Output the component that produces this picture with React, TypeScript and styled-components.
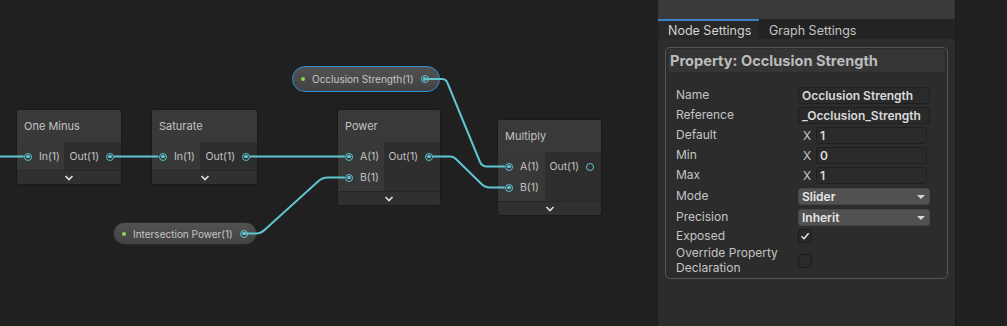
import React from 'react';
import styled, { createGlobalStyle } from 'styled-components';

const GlobalStyle = createGlobalStyle`
  html, body {
    margin: 0;
    padding: 0;
    background: #202020;
    font-family: Inter, "Noto Sans", "Liberation Sans", sans-serif;
    overflow: hidden;
  }
`;

const WIRE = '#5ec5d1';

const Screen = styled.div`
  display: flex;
  width: 1007px;
  height: 326px;
  overflow: hidden;
`;

// ---------- graph canvas ----------

const Canvas = styled.div`
  position: relative;
  width: 658px;
  height: 100%;
  background: #202020;
  overflow: hidden;
`;

const NodeBox = styled.div<{ $x: number; $y: number; $w: number }>`
  position: absolute;
  left: ${(p) => p.$x}px;
  top: ${(p) => p.$y}px;
  width: ${(p) => p.$w}px;
  display: flex;
  flex-direction: column;
  box-shadow: 0 0 0 1px #1a1a1a;
  border-radius: 2px;
  overflow: hidden;
`;

const NodeTitle = styled.div`
  height: 32px;
  display: flex;
  align-items: center;
  padding-left: 7px;
  background: #393939;
  color: #c2c2c2;
  font-size: 11px;
  white-space: nowrap;
`;

const PortsArea = styled.div`
  display: flex;
`;

const Inputs = styled.div<{ $w: number }>`
  width: ${(p) => p.$w}px;
  background: #383838;
  padding: 4px 0 3px;
`;

const Outputs = styled.div`
  flex: 1;
  background: #2e2e2e;
  padding: 4px 0 3px;
`;

const PortRow = styled.div<{ $out?: boolean }>`
  height: 21px;
  display: flex;
  align-items: center;
  justify-content: ${(p) => (p.$out ? 'flex-end' : 'flex-start')};
  gap: 7px;
  padding: ${(p) => (p.$out ? '0 7px 0 0' : '0 0 0 7px')};
  color: #c2c2c2;
  font-size: 10.5px;
  white-space: nowrap;
`;

const Port = styled.span<{ $connected?: boolean }>`
  position: relative;
  width: 8px;
  height: 8px;
  border-radius: 50%;
  border: 1.5px solid ${WIRE};
  box-sizing: border-box;
  flex-shrink: 0;
  &::after {
    content: '';
    position: absolute;
    inset: 1.2px;
    border-radius: 50%;
    background: ${(p) => (p.$connected ? WIRE : 'transparent')};
  }
`;

const CollapseBar = styled.div`
  height: 14px;
  display: flex;
  align-items: center;
  justify-content: center;
  background: #303030;
  border-top: 1px solid #262626;
  box-sizing: border-box;
`;

const Pill = styled.div<{ $x: number; $y: number; $w: number; $h: number; $selected?: boolean }>`
  position: absolute;
  left: ${(p) => p.$x}px;
  top: ${(p) => p.$y}px;
  width: ${(p) => p.$w}px;
  height: ${(p) => p.$h}px;
  box-sizing: border-box;
  border-radius: ${(p) => p.$h / 2}px;
  border: ${(p) => (p.$selected ? '1.5px solid #2f8dd3' : '1px solid #2a2a2a')};
  background: linear-gradient(#525252, #424242);
  display: flex;
  align-items: center;
  padding-left: 8px;
  gap: 7px;
  color: #c6c6c6;
  font-size: 10px;
  white-space: nowrap;
`;

const GreenDot = styled.span`
  width: 4px;
  height: 4px;
  border-radius: 50%;
  background: #8fd44d;
  flex-shrink: 0;
`;

const PillPort = styled(Port)`
  margin-left: auto;
  margin-right: 14px;
`;

const Wires = styled.svg`
  position: absolute;
  left: 0;
  top: 0;
  width: 658px;
  height: 326px;
  pointer-events: none;
`;

const Chevron = () => (
  <svg width="10" height="6" viewBox="0 0 10 6">
    <polyline points="1.5,1 5,4.5 8.5,1" fill="none" stroke="#e0e0e0" strokeWidth="1.6" />
  </svg>
);

type Slot = { label: string; connected?: boolean };

interface GraphNodeProps {
  title: string;
  x: number;
  y: number;
  w: number;
  inW: number;
  inputs: Slot[];
  outputs: Slot[];
}

const GraphNode: React.FC<GraphNodeProps> = ({ title, x, y, w, inW, inputs, outputs }) => (
  <NodeBox $x={x} $y={y} $w={w}>
    <NodeTitle>{title}</NodeTitle>
    <PortsArea>
      <Inputs $w={inW}>
        {inputs.map((s) => (
          <PortRow key={s.label}>
            <Port $connected={s.connected} />
            {s.label}
          </PortRow>
        ))}
      </Inputs>
      <Outputs>
        {outputs.map((s) => (
          <PortRow key={s.label} $out>
            {s.label}
            <Port $connected={s.connected} />
          </PortRow>
        ))}
      </Outputs>
    </PortsArea>
    <CollapseBar>
      <Chevron />
    </CollapseBar>
  </NodeBox>
);

// ---------- inspector ----------

const Panel = styled.div`
  width: 297px;
  display: flex;
  flex-direction: column;
  background: #2c2c2c;
`;

const PanelHeader = styled.div`
  height: 19px;
  background: #3a3a3a;
`;

const TabBar = styled.div`
  height: 20px;
  display: flex;
  background: #232323;
`;

const Tab = styled.div<{ $active?: boolean }>`
  width: ${(p) => (p.$active ? '101px' : 'auto')};
  box-sizing: border-box;
  padding-left: 10px;
  display: flex;
  align-items: center;
  font-size: 12.5px;
  color: ${(p) => (p.$active ? '#d2d2d2' : '#c4c4c4')};
  background: ${(p) => (p.$active ? '#282828' : 'transparent')};
  border-top: 2px solid ${(p) => (p.$active ? '#3c7fca' : 'transparent')};
`;

const PropertyBox = styled.div`
  margin: 8px 7px 0;
  border: 1px solid #565656;
  border-radius: 5px;
  padding: 1px 2px 3px;
`;

const BoxHeader = styled.div`
  height: 23px;
  display: flex;
  align-items: center;
  padding-left: 2px;
  background: #353535;
  border-radius: 3px;
  color: #bcbcbc;
  font-size: 14.6px;
  font-weight: 700;
`;

const Rows = styled.div`
  margin-top: 15px;
  padding-left: 8px;
  display: flex;
  flex-direction: column;
`;

const Row = styled.div<{ $h?: number; $mt?: number }>`
  display: flex;
  align-items: center;
  height: ${(p) => p.$h ?? 17}px;
  margin-top: ${(p) => p.$mt ?? 3}px;
  &:first-child {
    margin-top: 0;
  }
`;

const Label = styled.div`
  width: 122px;
  flex-shrink: 0;
  color: #c4c4c4;
  font-size: 12px;
  line-height: 14.5px;
`;

const Field = styled.div<{ $w?: number }>`
  width: ${(p) => p.$w ?? 132}px;
  height: 17px;
  box-sizing: border-box;
  display: flex;
  align-items: center;
  padding-left: 3px;
  background: #2a2a2a;
  border: 1px solid #1f1f1f;
  border-radius: 3px;
  color: #dadada;
  font-size: 12px;
  font-weight: 600;
  white-space: nowrap;
  overflow: hidden;
`;

const AxisLabel = styled.span`
  width: 18px;
  text-align: center;
  color: #c4c4c4;
  font-size: 12px;
`;

const Dropdown = styled(Field)`
  position: relative;
  background: #515151;
  border-color: #464646;
  color: #e6e6e6;
`;

const Caret = styled.span`
  position: absolute;
  right: 4px;
  top: 6px;
  width: 0;
  height: 0;
  border-left: 4px solid transparent;
  border-right: 4px solid transparent;
  border-top: 4px solid #d6d6d6;
`;

const Checkbox = styled.div`
  width: 14px;
  height: 14px;
  box-sizing: border-box;
  background: #2a2a2a;
  border: 1px solid #1d1d1d;
  border-radius: 3px;
  display: flex;
  align-items: center;
  justify-content: center;
`;

const Gutter = styled.div`
  flex: 1;
  background: #202020;
  border-left: 1px solid #1a1a1a;
`;

const Check = () => (
  <svg width="10" height="10" viewBox="0 0 10 10">
    <polyline points="1.5,5.3 4,7.8 8.6,2.2" fill="none" stroke="#ececec" strokeWidth="1.4" />
  </svg>
);

export default function App() {
  return (
    <>
      <GlobalStyle />
      <Screen>
        <Canvas>
          <GraphNode
            title="One Minus"
            x={17}
            y={110}
            w={104}
            inW={47}
            inputs={[{ label: 'In(1)', connected: true }]}
            outputs={[{ label: 'Out(1)', connected: true }]}
          />
          <GraphNode
            title="Saturate"
            x={152}
            y={110}
            w={105}
            inW={48}
            inputs={[{ label: 'In(1)', connected: true }]}
            outputs={[{ label: 'Out(1)', connected: true }]}
          />
          <GraphNode
            title="Power"
            x={338}
            y={110}
            w={102}
            inW={46}
            inputs={[
              { label: 'A(1)', connected: true },
              { label: 'B(1)', connected: true },
            ]}
            outputs={[{ label: 'Out(1)', connected: true }]}
          />
          <GraphNode
            title="Multiply"
            x={498}
            y={120}
            w={103}
            inW={47}
            inputs={[
              { label: 'A(1)', connected: true },
              { label: 'B(1)', connected: true },
            ]}
            outputs={[{ label: 'Out(1)' }]}
          />

          <Pill $x={292} $y={66} $w={148} $h={26} $selected>
            <GreenDot />
            Occlusion Strength(1)
            <PillPort $connected />
          </Pill>
          <Pill $x={113} $y={222} $w={144} $h={23}>
            <GreenDot />
            Intersection Power(1)
            <PillPort $connected />
          </Pill>

          <Wires viewBox="0 0 658 326">
            <g fill="none" stroke={WIRE} strokeWidth="2" strokeLinecap="round" strokeLinejoin="round">
              <path d="M -2 156.5 H 23" />
              <path d="M 114.5 156.5 H 157.5" />
              <path d="M 250.5 156.5 H 344" />
              <path d="M 245 233.5 H 256 Q 261 233.5 265 229.5 L 318 181.5 Q 322 177.5 328 177.5 H 344" />
              <path d="M 426 79 H 442 Q 446 79 447.5 83 L 480 162 Q 482 166.5 487 166.5 H 504" />
              <path d="M 433.5 156.5 H 450 Q 454 156.5 457 160 L 481 183.5 Q 485 187.5 490 187.5 H 504" />
            </g>
          </Wires>
        </Canvas>

        <Panel>
          <PanelHeader />
          <TabBar>
            <Tab $active>Node Settings</Tab>
            <Tab>Graph Settings</Tab>
          </TabBar>
          <PropertyBox>
            <BoxHeader>Property: Occlusion Strength</BoxHeader>
            <Rows>
              <Row>
                <Label>Name</Label>
                <Field>Occlusion Strength</Field>
              </Row>
              <Row>
                <Label>Reference</Label>
                <Field>_Occlusion_Strength</Field>
              </Row>
              <Row>
                <Label>Default</Label>
                <AxisLabel>X</AxisLabel>
                <Field $w={111}>1</Field>
              </Row>
              <Row>
                <Label>Min</Label>
                <AxisLabel>X</AxisLabel>
                <Field $w={111}>0</Field>
              </Row>
              <Row>
                <Label>Max</Label>
                <AxisLabel>X</AxisLabel>
                <Field $w={111}>1</Field>
              </Row>
              <Row $mt={4}>
                <Label>Mode</Label>
                <Dropdown>
                  Slider
                  <Caret />
                </Dropdown>
              </Row>
              <Row $mt={4}>
                <Label>Precision</Label>
                <Dropdown>
                  Inherit
                  <Caret />
                </Dropdown>
              </Row>
              <Row $h={14} $mt={3}>
                <Label>Exposed</Label>
                <Checkbox>
                  <Check />
                </Checkbox>
              </Row>
              <Row $h={29} $mt={3}>
                <Label>
                  Override Property
                  <br />
                  Declaration
                </Label>
                <Checkbox />
              </Row>
            </Rows>
          </PropertyBox>
        </Panel>
        <Gutter />
      </Screen>
    </>
  );
}
